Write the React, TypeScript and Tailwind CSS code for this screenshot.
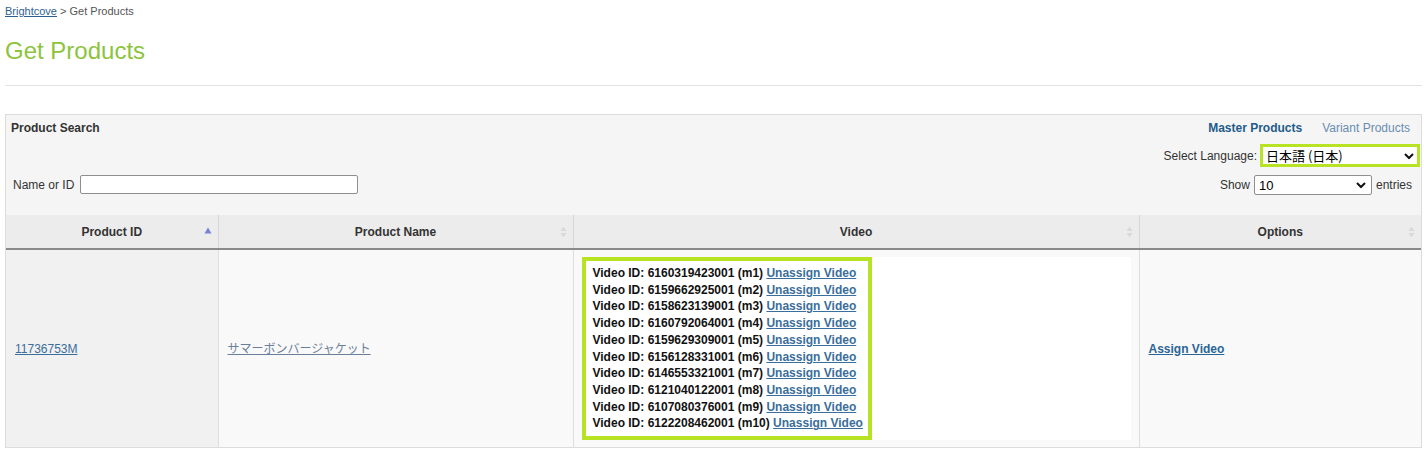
import React from 'react'

const videos = [
  ['6160319423001', 'm1'],
  ['6159662925001', 'm2'],
  ['6158623139001', 'm3'],
  ['6160792064001', 'm4'],
  ['6159629309001', 'm5'],
  ['6156128331001', 'm6'],
  ['6146553321001', 'm7'],
  ['6121040122001', 'm8'],
  ['6107080376001', 'm9'],
  ['6122208462001', 'm10'],
]

function Chevron() {
  return (
    <svg width="10" height="7" viewBox="0 0 10 7" className="pointer-events-none absolute right-[6px] top-1/2 -translate-y-1/2">
      <path d="M1 1.5 L5 5.5 L9 1.5" fill="none" stroke="#111" strokeWidth="2" />
    </svg>
  )
}

function SortIcon({ active }: { active?: boolean }) {
  if (active) {
    return (
      <svg width="8" height="7" viewBox="0 0 8 7" className="absolute right-[6px] top-1/2 -translate-y-[70%]">
        <path d="M4 0.5 L7.5 6.5 L0.5 6.5 Z" fill="#7a80d6" />
      </svg>
    )
  }
  return (
    <svg width="7" height="12" viewBox="0 0 7 12" className="absolute right-[6px] top-1/2 -translate-y-1/2">
      <path d="M3.5 0.5 L6.5 5 L0.5 5 Z" fill="#d9d9d9" />
      <path d="M3.5 11.5 L6.5 7 L0.5 7 Z" fill="#d9d9d9" />
    </svg>
  )
}

export default function App() {
  return (
    <div className="min-h-[449px] bg-white pl-[5px] pr-[2px] font-['Liberation_Sans',Arial,sans-serif] text-[12px] text-[#333]">
      {/* Breadcrumb */}
      <div className="pt-[4px] text-[11px] leading-[14px] text-[#555]">
        <a href="#" className="text-[#2f5f8f] underline">Brightcove</a>
        <span> &gt; Get Products</span>
      </div>

      <h1 className="mt-[19px] text-[24px] leading-[28px] text-[#8cc43c]">Get Products</h1>

      <div className="mt-[20px] h-px bg-[#e3e3e3]" />

      {/* Panel */}
      <div className="mt-[28px] border border-[#dcdcdc] bg-[#f5f5f5]">
        <div className="flex justify-between pl-[5px] pt-[6px]">
          <div className="flex flex-col">
            <div className="text-[12px] font-bold leading-[14px] text-[#333]">Product Search</div>
            <div className="mt-[40px] flex items-center gap-[6px] pl-[2px]">
              <span>Name or ID</span>
              <input type="text" className="h-[19px] w-[278px] rounded-[2px] border border-[#8f8f8f] bg-white" />
            </div>
          </div>
          <div className="flex flex-col items-end pr-[1px]">
            <div className="flex gap-[20px] pr-[10px] leading-[14px]">
              <a href="#" className="font-bold text-[#1f5c8a]">Master Products</a>
              <a href="#" className="text-[#6a8cb3]">Variant Products</a>
            </div>
            <div className="mt-[9px] flex items-center gap-[3px]">
              <span>Select Language:</span>
              <div className="relative">
                <select className="h-[23px] w-[160px] appearance-none border-[3px] border-[#b8e224] bg-white pl-[3px] font-['Noto_Sans_CJK_JP','Liberation_Sans',sans-serif] text-[13px] leading-[16px] text-black outline-none">
                  <option>日本語 (日本)</option>
                </select>
                <Chevron />
              </div>
            </div>
            <div className="mt-[8px] flex items-center gap-[4px] pr-[8px]">
              <span>Show</span>
              <div className="relative">
                <select className="h-[20px] w-[118px] appearance-none rounded-[2px] border border-[#8f8f8f] bg-white pl-[4px] text-[13px] text-black outline-none">
                  <option>10</option>
                </select>
                <Chevron />
              </div>
              <span>entries</span>
            </div>
          </div>
        </div>

        <table className="mt-[20px] w-full table-fixed border-collapse">
          <colgroup>
            <col className="w-[212px]" />
            <col className="w-[355px]" />
            <col className="w-[566px]" />
            <col />
          </colgroup>
          <thead>
            <tr className="h-[34px] bg-[#ececec]">
              {['Product ID', 'Product Name', 'Video', 'Options'].map((h, i) => (
                <th
                  key={h}
                  className="relative border-b-2 border-r border-b-[#8a8a8a] border-r-[#d6d6d6] text-center text-[12px] font-bold text-[#333] last:border-r-0"
                >
                  {h}
                  <SortIcon active={i === 0} />
                </th>
              ))}
            </tr>
          </thead>
          <tbody>
            <tr className="h-[197px] align-middle">
              <td className="border-r border-[#dedede] bg-[#f1f1f1] pl-[9px]">
                <a href="#" className="text-[#3a6e9c] underline">11736753M</a>
              </td>
              <td className="border-r border-[#dedede] bg-[#f9f9f9] pl-[9px]">
                <a href="#" className="font-['Noto_Sans_CJK_JP',sans-serif] text-[12px] text-[#6a7f99] underline">
                  サマーボンバージャケット
                </a>
              </td>
              <td className="border-r border-[#dedede] bg-[#f9f9f9] px-[8px] py-[7px]">
                <div className="flex bg-white">
                  <div className="border-[4px] border-[#b8e224] py-[4px] pl-[7px] pr-[5px]">
                    {videos.map(([id, m]) => (
                      <div key={m} className="whitespace-nowrap text-[12px] font-bold leading-[16.7px] text-[#111]">
                        Video ID: {id} ({m}){' '}
                        <a href="#" className="text-[#3a6e9c] underline">Unassign Video</a>
                      </div>
                    ))}
                  </div>
                </div>
              </td>
              <td className="bg-[#f9f9f9] pl-[9px]">
                <a href="#" className="font-bold text-[#2a6597] underline">Assign Video</a>
              </td>
            </tr>
          </tbody>
        </table>
      </div>
    </div>
  )
}
